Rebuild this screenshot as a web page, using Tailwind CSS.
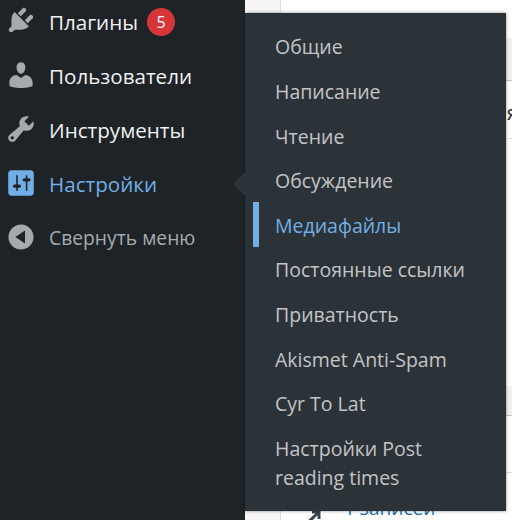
<!DOCTYPE html>
<html><head><meta charset="utf-8"><script src="https://cdn.jsdelivr.net/npm/@tailwindcss/browser@4"></script></head>
<body class="m-0 bg-white">
<div class="relative flex w-[512px] h-[520px] overflow-hidden bg-white font-['Open_Sans','Noto_Sans',sans-serif]">
  <aside class="w-[245px] h-full shrink-0 bg-[#1d2327] flex flex-col pt-[8px] text-[20.6px] leading-[28px]">
    <div class="flex items-center h-[28px] mb-[26px] text-[#f0f0f1]">
      <svg class="w-[32px] h-[32px] shrink-0 ml-[4.5px] mr-[12.5px] -translate-y-[2px]" viewBox="0 0 20 20" fill="#a7aaad"><path d="M13.11 4.36L9.87 7.6 8 5.73l3.24-3.24c.35-.34 1.05-.2 1.56.32.52.51.66 1.21.31 1.55zm-8 1.77l.91-1.12 9.01 9.01-1.19.84c-.71.71-2.63 1.16-3.82 1.16H6.14L4.9 17.26c-.59.59-1.54.59-2.12 0-.59-.58-.59-1.53 0-2.12l1.24-1.24v-3.88c0-1.13.4-3.19 1.09-3.89zm7.26 3.97l3.24-3.24c.34-.35 1.04-.21 1.55.31.52.51.66 1.21.31 1.55l-3.24 3.25z"/></svg>
      <span>Плагины</span>
      <span class="ml-[9px] w-[28px] h-[28px] rounded-full bg-[#d63638] text-white text-[16px] flex items-center justify-center">5</span>
    </div>
    <div class="flex items-center h-[28px] mb-[26px] text-[#f0f0f1]">
      <svg class="w-[32px] h-[32px] shrink-0 ml-[4.5px] mr-[12.5px] -translate-y-[1px]" viewBox="0 0 20 20" fill="#a7aaad"><path d="M10 9.25c-2.27 0-2.73-3.44-2.73-3.44C7 4.02 7.82 2 9.97 2c2.16 0 2.98 2.02 2.71 3.81 0 0-.41 3.44-2.68 3.44zm0 2.57L12.72 10c2.39 0 4.52 2.33 4.52 4.53v2.49s-3.65 1.13-7.24 1.13c-3.65 0-7.24-1.13-7.24-1.13v-2.49c0-2.25 1.94-4.48 4.47-4.48z"/></svg>
      <span>Пользователи</span>
    </div>
    <div class="flex items-center h-[28px] mb-[26px] text-[#f0f0f1]">
      <svg class="w-[32px] h-[32px] shrink-0 ml-[4.5px] mr-[12.5px] -translate-y-[1px]" viewBox="0 0 20 20" fill="#a7aaad"><path d="M16.68 9.77c-1.34 1.34-3.3 1.67-4.95.99l-5.41 6.52c-.99.99-2.59.99-3.58 0s-.99-2.59 0-3.57l6.52-5.42c-.68-1.65-.35-3.61.99-4.95 1.28-1.28 3.12-1.62 4.72-1.06l-2.89 2.89 2.82 2.82 2.86-2.87c.53 1.58.18 3.39-1.08 4.65zM3.81 16.21c.4.39 1.04.39 1.43 0 .4-.4.4-1.04 0-1.43-.39-.4-1.03-.4-1.43 0-.39.39-.39 1.03 0 1.43z"/></svg>
      <span>Инструменты</span>
    </div>
    <div class="flex items-center h-[28px] mb-[26px] text-[#72aee6]">
      <svg class="w-[32px] h-[32px] shrink-0 ml-[4.5px] mr-[12.5px] -translate-y-[1px]" viewBox="0 0 20 20" fill="#72aee6"><path d="M18 16V4c0-1.1-.9-2-2-2H4c-1.100 0-2 .9-2 2v12c0 1.100.9 2 2 2h12c1.100 0 2-.9 2-2zM8 11h1c.55 0 1 .45 1 1s-.45 1-1 1H8v1.500c0 .28-.22.5-.5.5s-.5-.22-.5-.5V13H6c-.55 0-1-.45-1-1s.45-1 1-1h1V5.500c0-.28.22-.5.5-.5s.5.22.5.5V11zm5-2h-1c-.55 0-1-.45-1-1s.45-1 1-1h1V5.500c0-.28.22-.5.5-.5s.5.22.5.5V7h1c.55 0 1 .45 1 1s-.45 1-1 1h-1v5.500c0 .28-.22.5-.5.5s-.5-.22-.5-.5V9z"/></svg>
      <span>Настройки</span>
    </div>
    <div class="flex items-center h-[28px] text-[#a7aaad] text-[19.3px]">
      <svg class="w-[32px] h-[32px] shrink-0 ml-[4.5px] mr-[12.5px] -translate-y-[1px]" viewBox="0 0 20 20" fill="#a7aaad"><path d="M10 2.160c4.330 0 7.840 3.510 7.840 7.840s-3.510 7.840-7.840 7.840S2.160 14.330 2.160 10 5.670 2.160 10 2.160zm2.500 11.840V6l-6 4z" fill-rule="evenodd"/></svg>
      <span>Свернуть меню</span>
    </div>
  </aside>
  <main class="flex-1 flex bg-white">
    <div class="w-[36px] h-full bg-[#f5f5f5] border-r border-[#dcdcde]"></div>
    <div class="flex-1 flex flex-col">
      <div class="h-[38px]"></div>
      <div class="h-[43px] bg-[#f0f0f1] border-b border-[#c3c4c7]"></div>
      <div class="h-[58px] border-b border-[#dcdcde] flex items-center pl-[226px] text-[20px] text-[#1d2327] overflow-hidden"><span class="translate-y-[3px]">я</span></div>
      <div class="h-[247px]"></div>
      <div class="h-[30px] bg-[#f0f0f1] border-b border-[#c3c4c7]"></div>
      <div class="h-[57px] border-b border-[#dcdcde]"></div>
      <div class="flex-1 relative">
        <svg class="absolute left-[21px] top-[34px] w-[20px] h-[20px]" viewBox="0 0 20 20" fill="none" stroke="#3c434a" stroke-width="3"><path d="M2 19L16 6M10 5h7v7"/></svg>
        <a class="absolute left-[63px] top-[22px] text-[19px] leading-[26px] text-[#2271b1] whitespace-nowrap">1 записей</a>
      </div>
    </div>
  </main>
  <div class="absolute left-[245px] top-[13px] w-[261px] h-[498px] bg-[#2c3338] pl-[30px] pt-[19.4px] text-[19.5px] leading-[30px] text-[#c3c4c7] shadow-[0_0_3px_rgba(0,0,0,0.45)]">
    <div class="absolute left-[-12px] top-[159px] w-0 h-0 border-y-[12px] border-y-transparent border-r-[12px] border-r-[#2c3338]"></div>
    <div class="absolute left-[8px] top-[189px] w-[6px] h-[45px] bg-[#72aee6]"></div>
    <ul class="flex flex-col gap-[14.6px]">
      <li>Общие</li><li>Написание</li><li>Чтение</li><li>Обсуждение</li>
      <li class="text-[#72aee6]">Медиафайлы</li>
      <li>Постоянные ссылки</li><li>Приватность</li><li>Akismet Anti-Spam</li><li>Cyr To Lat</li>
      <li class="leading-[29px]">Настройки Post<br>reading times</li>
    </ul>
  </div>
</div>
</body></html>
